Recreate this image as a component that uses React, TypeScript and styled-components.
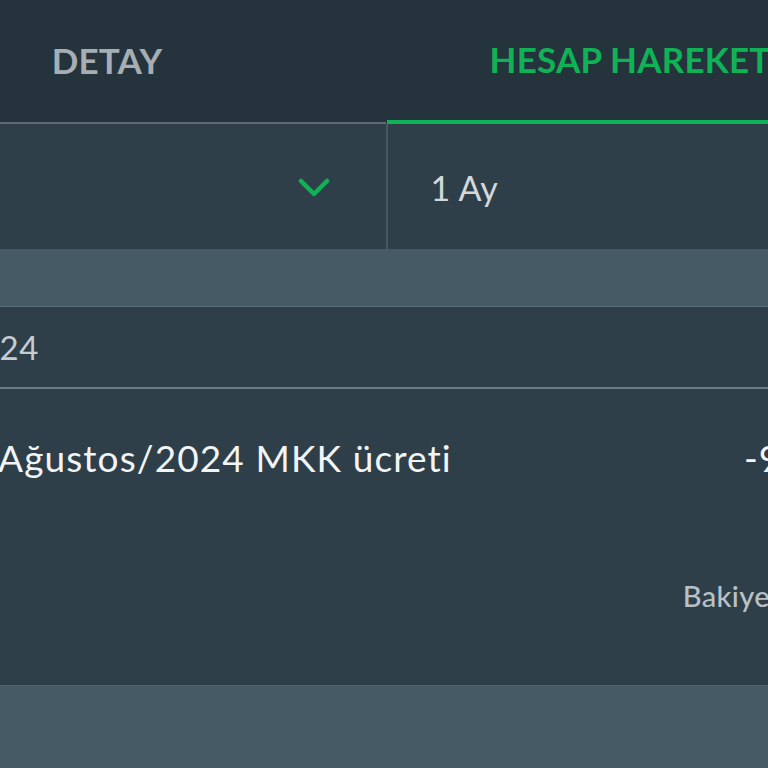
import styled, { createGlobalStyle } from "styled-components";

const GlobalStyle = createGlobalStyle`
  html, body {
    margin: 0;
    padding: 0;
    overflow: hidden;
    background: #2e3f4a;
  }

  body {
    font-family: Lato, "Noto Sans", "Liberation Sans", sans-serif;
  }
`;

interface TabProps {
  active?: boolean;
}

const tabs = [
  { label: "DETAY", active: false },
  { label: "HESAP HAREKETLERİ", active: true },
];

const Chevron = () => (
  <ChevronSvg viewBox="0 0 32 20" width={32} height={20}>
    <polyline points="3,3 16,16 29,3" fill="none" stroke="currentColor" strokeWidth="4.5" strokeLinecap="round" strokeLinejoin="round" />
  </ChevronSvg>
);

const App = () => {
  return (
    <>
      <GlobalStyle />
      <Screen>
        <TabBar>
          {tabs.map((tab) => (
            <Tab key={tab.label} active={tab.active}>
              {tab.label}
            </Tab>
          ))}
        </TabBar>

        <FilterRow>
          <Select>
            <span />
            <Chevron />
          </Select>
          <Divider />
          <Select>
            <SelectText>1 Ay</SelectText>
          </Select>
        </FilterRow>

        <Band />

        <DateRow>30.08.2024</DateRow>

        <Transaction>
          <TransactionTop>
            <Description>Ağustos/2024 MKK ücreti</Description>
            <Amount>-9,28 TL</Amount>
          </TransactionTop>
          <Balance>Bakiye: 0,00 TL</Balance>
        </Transaction>

        <Band $tall />
      </Screen>
    </>
  );
};

export default App;

const Screen = styled.div`
  width: 1117px;
  margin-left: -172px;
  display: flex;
  flex-direction: column;
`;

const TabBar = styled.nav`
  display: grid;
  grid-template-columns: 558px 1fr;
  height: 124px;
  background: #25333d;
`;

const Tab = styled.div<TabProps>`
  display: flex;
  align-items: center;
  justify-content: center;
  padding-bottom: 2px;
  box-sizing: border-box;
  border-bottom: ${({ active }) => (active ? "4px solid #10b256" : "2px solid #5f6c74")};
  margin-left: ${({ active }) => (active ? "1px" : "0")};

  color: ${({ active }) => (active ? "#10b256" : "#a6aeb4")};
  font-size: 35px;
  font-weight: 700;
  letter-spacing: 0.2px;
`;

const FilterRow = styled.section`
  display: flex;
  height: 125px;
  background: #2e3f4a;
`;

const Select = styled.div`
  flex: 1;
  display: flex;
  align-items: center;
  justify-content: space-between;
  padding: 2px 56px 0 43px;
`;

const ChevronSvg = styled.svg`
  color: #10b256;
`;

const Divider = styled.div`
  width: 2px;
  background: #465862;
`;

const SelectText = styled.span`
  color: #d3d8db;
  font-size: 34px;
  letter-spacing: 0.3px;
`;

const Band = styled.div<{ $tall?: boolean }>`
  height: ${({ $tall }) => ($tall ? "83px" : "57px")};
  background: #465a66;
  border-top: ${({ $tall }) => ($tall ? "1px solid #52666f" : "none")};
  border-bottom: ${({ $tall }) => ($tall ? "none" : "1px solid #5a6d78")};
`;

const DateRow = styled.div`
  display: flex;
  align-items: center;
  height: 80px;
  padding-left: 38px;
  border-bottom: 2px solid #6b7c86;
  background: #2e3f4a;

  color: #c6ccd0;
  font-size: 33px;
  letter-spacing: 0.4px;
`;

const Transaction = styled.article`
  display: flex;
  flex-direction: column;
  height: 296px;
  box-sizing: border-box;
  padding: 46px 58px 0 170px;
  background: #2e3f4a;
`;

const TransactionTop = styled.div`
  display: flex;
  align-items: baseline;
  justify-content: space-between;
`;

const Description = styled.span`
  color: #f2f4f5;
  font-size: 37px;
  letter-spacing: 1.1px;
`;

const Amount = styled.span`
  color: #f2f4f5;
  font-size: 37px;
  letter-spacing: 0.9px;
`;

const Balance = styled.span`
  align-self: flex-end;
  margin-top: 98px;
  margin-right: 3px;
  color: #b9c1c6;
  font-size: 29px;
  font-weight: 500;
  letter-spacing: 0.4px;
`;
